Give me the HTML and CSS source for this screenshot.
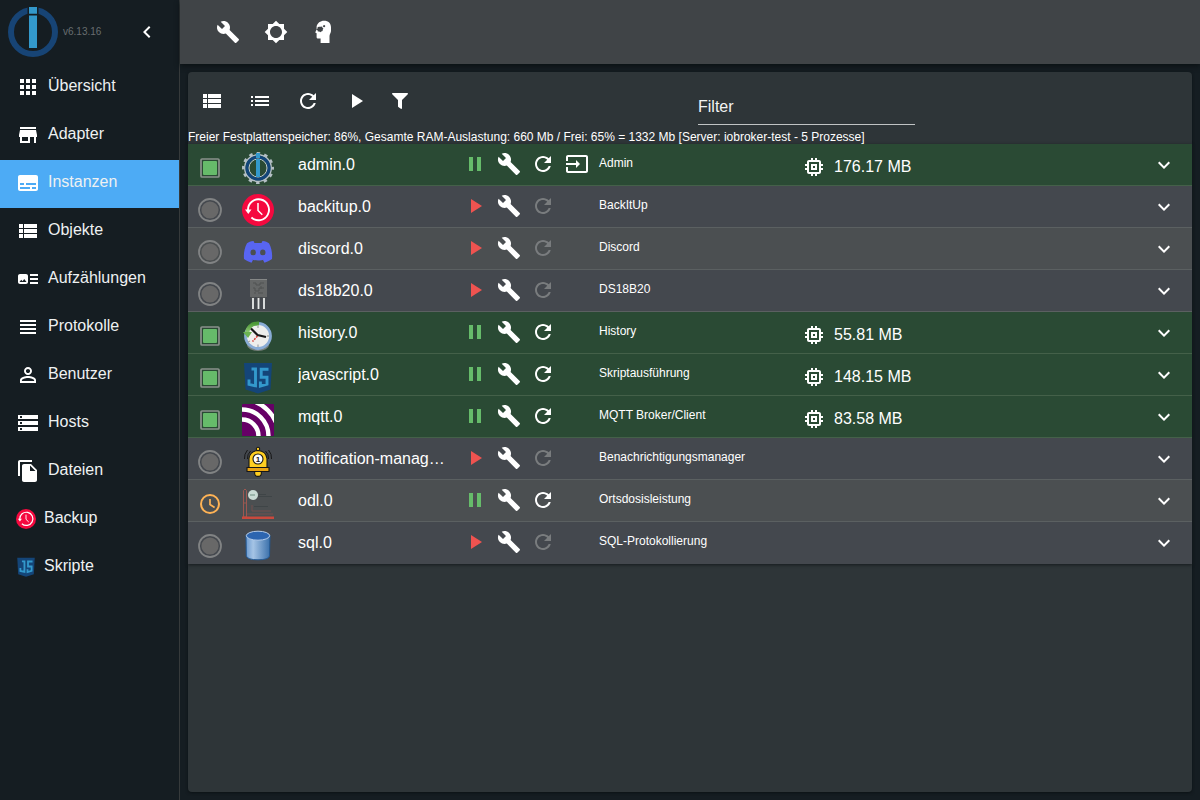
FILE: index.html
```html
<!DOCTYPE html>
<html lang="de">
<head>
<meta charset="utf-8">
<title>Instanzen</title>
<link rel="stylesheet" href="styles.css">
</head>
<body>
<svg class="sprite" aria-hidden="true">
  <defs>
    <linearGradient id="cylinder"><stop offset="0" stop-color="#6d9bd0"/><stop offset=".3" stop-color="#a5c4e5"/><stop offset="1" stop-color="#3a70ab"/></linearGradient>
    <linearGradient id="arrow" x2="0" y2="1"><stop offset="0" stop-color="#4d9a38"/><stop offset="1" stop-color="#9bd07d"/></linearGradient>
  </defs>
  <symbol id="build" viewBox="0 0 24 24"><path d="M22.7 19l-9.1-9.1c.9-2.3.4-5-1.5-6.9-2-2-5-2.4-7.4-1.3L9 6 6 9 1.6 4.7C.4 7.1.9 10.1 2.9 12.1c1.9 1.9 4.6 2.4 6.9 1.5l9.1 9.1c.4.4 1 .4 1.4 0l2.3-2.3c.5-.4.5-1.1.1-1.4z"/></symbol>
  <symbol id="brightness" viewBox="0 0 24 24"><path d="M20 15.31 23.31 12 20 8.69V4h-4.69L12 .69 8.69 4H4v4.69L.69 12 4 15.31V20h4.69L12 23.31 15.31 20H20v-4.69zM12 18c-3.31 0-6-2.69-6-6s2.69-6 6-6 6 2.69 6 6-2.69 6-6 6z"/></symbol>
  <symbol id="expert" viewBox="0 0 24 24"><path fill-rule="evenodd" d="M12 .8C16.500.8 19 3.400 19 7.500V11c0 2-1.500 3-1.500 5v7H8.600v-4.500H6.200c-1 0-1.600-.6-1.600-1.600v-3.700l-1.400-.7 1.400-2.900V6.600C5.200 3 8.400.8 12 .8zM7.400 6.700l-1.700.4-.2 1.500-1 .8 1 .9.400 1.200 1.400.1 1 .6 1-.8 1.300-.4.1-1.300.7-1.100-.9-.8-.4-1.200-1.400.1zM11.500 5.200l-.6.8.4 1 1 .3.8-.6.1-1-.8-.7z"/></symbol>
  <symbol id="apps" viewBox="0 0 24 24"><path d="M4 8h4V4H4v4zm6 12h4v-4h-4v4zm-6 0h4v-4H4v4zm0-6h4v-4H4v4zm6 0h4v-4h-4v4zm6-10v4h4V4h-4zm-6 4h4V4h-4v4zm6 6h4v-4h-4v4zm0 6h4v-4h-4v4z"/></symbol>
  <symbol id="store" viewBox="0 0 24 24"><path d="M20 4H4v2h16V4zm1 10v-2l-1-5H4l-1 5v2h1v6h10v-6h4v6h2v-6h1zm-9 4H6v-4h6v4z"/></symbol>
  <symbol id="subtitles" viewBox="0 0 24 24"><path d="M20 4H4c-1.100 0-2 .9-2 2v12c0 1.100.9 2 2 2h16c1.100 0 2-.9 2-2V6c0-1.100-.9-2-2-2zM4 12h4v2H4v-2zm10 6H4v-2h10v2zm6 0h-4v-2h4v2zm0-4H10v-2h10v2z"/></symbol>
  <symbol id="viewlist" viewBox="0 0 24 24"><path d="M3 14h4v-4H3v4zm0 5h4v-4H3v4zM3 9h4V5H3v4zm5 5h13v-4H8v4zm0 5h13v-4H8v4zM8 5v4h13V5H8z"/></symbol>
  <symbol id="arttrack" viewBox="0 0 24 24"><path d="M22 13h-8v-2h8v2zm0-6h-8v2h8V7zm-8 10h8v-2h-8v2zm-2-8v6c0 1.100-.9 2-2 2H4c-1.100 0-2-.9-2-2V9c0-1.100.9-2 2-2h6c1.100 0 2 .9 2 2zm-1.500 6-2.250-3-1.750 2.260-1.250-1.510L3.500 15h7z"/></symbol>
  <symbol id="headline" viewBox="0 0 24 24"><path d="M4 15h16v-2H4v2zm0 4h16v-2H4v2zm0-8h16V9H4v2zm0-6v2h16V5H4z"/></symbol>
  <symbol id="person" viewBox="0 0 24 24"><path d="M12 5.900c1.160 0 2.100.94 2.100 2.100s-.94 2.100-2.100 2.100S9.900 9.160 9.900 8s.94-2.100 2.100-2.100m0 9c2.970 0 6.100 1.460 6.100 2.100v1.100H5.900V17c0-.64 3.130-2.100 6.100-2.100M12 4C9.790 4 8 5.790 8 8s1.790 4 4 4 4-1.790 4-4-1.790-4-4-4zm0 9c-2.670 0-8 1.340-8 4v3h16v-3c0-2.660-5.330-4-8-4z"/></symbol>
  <symbol id="storage" viewBox="0 0 24 24"><path d="M2 20h20v-4H2v4zm2-3h2v2H4v-2zM2 4v4h20V4H2zm4 3H4V5h2v2zm-4 7h20v-4H2v4zm2-3h2v2H4v-2z"/></symbol>
  <symbol id="files" viewBox="0 0 24 24"><path d="M16 1H4c-1.100 0-2 .9-2 2v14h2V3h12V1zm-1 4 6 6v10c0 1.100-.9 2-2 2H7.990C6.890 23 6 22.100 6 21V7c0-1.100.89-2 1.990-2h7zm-1 7h5.500L14 6.500V12z"/></symbol>
  <symbol id="list" viewBox="0 0 24 24"><path d="M3 13h2v-2H3v2zm0 4h2v-2H3v2zm0-8h2V7H3v2zm4 4h14v-2H7v2zm0 4h14v-2H7v2zM7 7v2h14V7H7z"/></symbol>
  <symbol id="refresh" viewBox="0 0 24 24"><path d="M17.650 6.350C16.200 4.900 14.210 4 12 4c-4.420 0-7.990 3.580-7.990 8s3.570 8 7.990 8c3.730 0 6.840-2.550 7.730-6h-2.080c-.82 2.330-3.040 4-5.650 4-3.310 0-6-2.690-6-6s2.690-6 6-6c1.660 0 3.140.69 4.220 1.780L13 11h7V4l-2.350 2.350z"/></symbol>
  <symbol id="play" viewBox="0 0 24 24"><path d="M8 5v14l11-7z"/></symbol>
  <symbol id="pause" viewBox="0 0 24 24"><path d="M6 19h4V5H6v14zm8-14v14h4V5h-4z"/></symbol>
  <symbol id="filter" viewBox="0 0 512 512"><path d="M487.976 0H24.028C2.710 0-8.047 25.866 7.058 40.971L192 225.941V432c0 7.831 3.821 15.170 10.237 19.662l80 55.980C298.020 518.690 320 507.493 320 487.980V225.941l184.947-184.970C520.021 25.896 509.338 0 487.976 0z"/></symbol>
  <symbol id="input" viewBox="0 0 24 24"><path d="M21 3.010H3c-1.100 0-2 .9-2 2V9h2V4.990h18v14.030H3V15H1v4.010c0 1.100.9 1.980 2 1.980h18c1.100 0 2-.88 2-1.980v-14c0-1.110-.9-2-2-2zM11 16l4-4-4-4v3H1v2h10v3z"/></symbol>
  <symbol id="memory" viewBox="0 0 24 24"><path d="M15 9H9v6h6V9zm-2 4h-2v-2h2v2zm8-2V9h-2V7c0-1.100-.9-2-2-2h-2V3h-2v2h-2V3H9v2H7c-1.100 0-2 .9-2 2v2H3v2h2v2H3v2h2v2c0 1.100.9 2 2 2h2v2h2v-2h2v2h2v-2h2c1.100 0 2-.9 2-2v-2h2v-2h-2v-2h2zm-4 6H7V7h10v10z"/></symbol>
  <symbol id="more" viewBox="0 0 24 24"><path d="M16.590 8.590 12 13.170 7.410 8.590 6 10l6 6 6-6z"/></symbol>
  <symbol id="left" viewBox="0 0 24 24"><path d="M15.410 7.410 14 6l-6 6 6 6 1.410-1.410L10.830 12z"/></symbol>
  <symbol id="logo" viewBox="0 0 50 50"><circle cx="25" cy="25" r="22" fill="none" stroke="#174475" stroke-width="6"/><path fill="#151d22" d="M19.500 0h11v10h-11z"/><path fill="#3399cc" d="M21 0h8v6.800h-8zM21 8.500h8v32.500h-8z"/></symbol>
  <symbol id="backup" viewBox="0 0 32 32"><circle cx="16" cy="16" r="16" fill="#f5093f"/><g fill="none" stroke="#fff" stroke-width="1.900"><path d="M6 16.200A10.500 10.500 0 1 1 9.400 23.500"/><path stroke-width="1.500" d="M16 9v7.500l4.300 4.200"/></g><path fill="#fff" d="M3 15.500h6.500L6.300 20z"/></symbol>
  <symbol id="js" viewBox="0 0 32 32"><path fill="#144578" d="M2 1h28l-1.500 26.500L16 31.500 3.500 27.500z"/><path fill="none" stroke="#3399cc" stroke-width="2.900" d="M13.500 5.500v18.300l-6.500-1.400v-4.800M26.500 7.200h-7.300v8h5.800v7L18.400 24v-4.500M9.500 7h4"/></symbol>
  <symbol id="circle" viewBox="0 0 24 24"><circle cx="12" cy="12" r="11" fill="none" stroke="#818384" stroke-width="1.800"/><circle cx="12" cy="12" r="8.600" fill="#686868"/></symbol>
  <symbol id="square" viewBox="0 0 24 24"><rect x="3" y="3" width="18" height="18" rx="1" fill="none" stroke="#8b918c" stroke-width="1.700"/><rect x="5" y="5" width="14" height="14" rx="1" fill="#66bb6a"/></symbol>
  <symbol id="clock" viewBox="0 0 24 24"><g fill="none" stroke="#ffb355"><circle cx="12" cy="12" r="9" stroke-width="2"/><path stroke-width="1.700" d="M12 7v5.600l4.600 2.800"/></g></symbol>
  <symbol id="admin" viewBox="0 0 32 32"><circle cx="16" cy="16" r="13.200" fill="none" stroke="#b4bfc4" stroke-width="1.600"/><circle cx="16" cy="16" r="14.700" fill="none" stroke="#b4bfc4" stroke-width="2.600" stroke-dasharray="3.500 4.197" stroke-dashoffset="1.750"/><circle cx="16" cy="16" r="11" fill="none" stroke="#124579" stroke-width="3.200"/><circle cx="16" cy="16" r="9" fill="none" stroke="#c0cbce" stroke-width="1"/><path fill="#3399cc" d="M14 1h4v5h-4zM14 7h4v18h-4z"/></symbol>
  <symbol id="discord" viewBox="0 0 32 32"><path fill="#5865f2" fill-rule="evenodd" d="M11.500 5C8.500 5.400 6.700 6.200 5 7.200 2.400 12 1.500 17.200 2 23c2.700 2 5.100 3 7.500 3.700l1.500-2.700-2.300-1c4.600 2 10.100 2 14.600 0L21 24l1.500 2.700c2.400-.7 4.800-1.700 7.500-3.700.5-5.800-.4-11-3-15.800-1.700-1-3.500-1.800-6.500-2.200l-1 2h-7zM11.200 13.500a2.700 2.900 0 1 1 0 5.800 2.700 2.900 0 0 1 0-5.800zm9.600 0a2.700 2.900 0 1 1 0 5.800 2.700 2.900 0 0 1 0-5.800z"/></symbol>
  <symbol id="sensor" viewBox="0 0 32 32"><path fill="#656767" d="M8 1h17v18H8z"/><path fill="#858787" d="M8 1h17v1H8z"/><path stroke="#505253" stroke-width="1" fill="none" d="M11 5h3v2h4V5h4M11 10h2v3h4v-3h5M12 15h2m2 0h5M19 8v3"/><path stroke="#505252" stroke-width="3" d="M11 19v3m5.500-3v3m5.500-3v3"/><path stroke="#e8eaea" stroke-width="1.800" d="M11 20v11m5.500-11v11m5.500-11v11"/></symbol>
  <symbol id="history" viewBox="0 0 32 32"><ellipse cx="16" cy="25" rx="11" ry="6" fill="#78807b"/><circle cx="16" cy="16" r="12.500" fill="#eeeeec" stroke="#89acd6" stroke-width="2.800"/><path fill="none" stroke="url(#arrow)" stroke-width="4" d="M17 3.500C9 3 5 8 5 14"/><path fill="#6bb251" d="M1 12h9l-4 6z"/><path stroke="#a8aaa8" stroke-width="1.300" d="M16 5.500V8m0 16.500V27m9-11h2M8 21l-2 1"/><path fill="none" stroke="#171717" stroke-width="2.200" d="m9 8.500 6.500 6.500 8.500 2"/><path stroke="#d53b34" stroke-width="1.500" stroke-dasharray="2 1" d="m15.500 16-5 5.500"/></symbol>
  <symbol id="mqtt" viewBox="0 0 32 32"><rect width="32" height="32" rx="1" fill="#660066"/><clipPath id="mqttbox"><rect width="32" height="32" rx="1"/></clipPath><g clip-path="url(#mqttbox)" fill="none" stroke="#fff" stroke-width="4.400"><circle cx="0" cy="32" r="16.500"/><circle cx="0" cy="32" r="26.500"/><circle cx="0" cy="32" r="36.500"/></g></symbol>
  <symbol id="bell" viewBox="0 0 32 32"><g fill="none" stroke="#171717" stroke-width="1"><path d="M5.500 4Q2 8 2.500 13M8.500 5Q5 8.500 5.500 13M26.500 4Q30 8 29.500 13M23.500 5Q27 8.500 26.500 13"/></g><g fill="#ffcf22" stroke="#171717" stroke-width="1.100"><circle cx="16" cy="27" r="3.400"/><circle cx="16" cy="3" r="1.700"/><path d="M7 22V12.500Q8 5 16 4.500 24 5 25 12.500V22z"/><path fill="#e9a413" d="M5 21.500h22v4H5z"/><circle cx="16" cy="13" r="5" fill="#fff"/></g><text class="bell-digit" x="16" y="16" text-anchor="middle">1</text></symbol>
  <symbol id="odl" viewBox="0 0 32 32"><path fill="none" stroke="#9c5851" d="M1.500 2.500 3 1l1.500 1.500V29h-3zM1 15h4"/><path fill="none" stroke="#74504e" d="M10 17v6h19M5 26h26"/><path fill="#c9493d" d="M0 28.500h32V31H0z"/><circle cx="11" cy="7" r="5" fill="#c9dbd4"/><path stroke="#9bb5aa" stroke-width="2" d="M8 7h5"/><path stroke="#3f4547" d="M17 6.500h7m-8 2h14M12 18.500h14"/></symbol>
  <symbol id="sql" viewBox="0 0 32 32"><path fill="url(#cylinder)" stroke="#235a96" d="M4 5.500 4.300 26Q5.500 29.800 16 29.800T27.500 26L28 5.500z"/><ellipse cx="16" cy="5.700" rx="11.700" ry="4.500" fill="#2c65b0" stroke="#b5cdea" stroke-width="1"/></symbol>
</svg>
<div class="app">
  <aside class="sidebar">
    <header class="brand">
      <svg class="brand-logo"><use href="#logo"/></svg>
      <span class="version">v6.13.16</span>
      <button class="icon-button collapse" aria-label="Menü einklappen"><svg class="icon"><use href="#left"/></svg></button>
    </header>
    <nav class="menu">
      <a href="#overview" class="menu-item"><svg class="icon"><use href="#apps"/></svg>Übersicht</a>
      <a href="#adapters" class="menu-item"><svg class="icon"><use href="#store"/></svg>Adapter</a>
      <a href="#instances" class="menu-item active" aria-current="page"><svg class="icon"><use href="#subtitles"/></svg>Instanzen</a>
      <a href="#objects" class="menu-item"><svg class="icon"><use href="#viewlist"/></svg>Objekte</a>
      <a href="#enums" class="menu-item"><svg class="icon"><use href="#arttrack"/></svg>Aufzählungen</a>
      <a href="#logs" class="menu-item"><svg class="icon"><use href="#headline"/></svg>Protokolle</a>
      <a href="#users" class="menu-item"><svg class="icon"><use href="#person"/></svg>Benutzer</a>
      <a href="#hosts" class="menu-item"><svg class="icon"><use href="#storage"/></svg>Hosts</a>
      <a href="#files-tab" class="menu-item"><svg class="icon"><use href="#files"/></svg>Dateien</a>
      <a href="#backup-tab" class="menu-item"><svg class="icon tab-icon"><use href="#backup"/></svg>Backup</a>
      <a href="#scripts" class="menu-item"><svg class="icon tab-icon"><use href="#js"/></svg>Skripte</a>
    </nav>
  </aside>
  <div class="content">
    <header class="appbar">
      <button class="icon-button" aria-label="Systemeinstellungen"><svg class="icon"><use href="#build"/></svg></button>
      <button class="icon-button" aria-label="Farbschema"><svg class="icon"><use href="#brightness"/></svg></button>
      <button class="icon-button" aria-label="Expertenmodus"><svg class="icon"><use href="#expert"/></svg></button>
    </header>
    <main class="panel">
      <div class="toolbar">
        <button class="icon-button" aria-label="Kategorien"><svg class="icon"><use href="#viewlist"/></svg></button>
        <button class="icon-button" aria-label="Liste"><svg class="icon"><use href="#list"/></svg></button>
        <button class="icon-button" aria-label="Aktualisieren"><svg class="icon"><use href="#refresh"/></svg></button>
        <button class="icon-button" aria-label="Nur laufende"><svg class="icon"><use href="#play"/></svg></button>
        <button class="icon-button compact" aria-label="Statusfilter"><svg class="icon small"><use href="#filter"/></svg></button>
        <input class="filter" type="text" placeholder="Filter" aria-label="Filter">
      </div>
      <p class="summary">Freier Festplattenspeicher: 86%, Gesamte RAM-Auslastung: 660 Mb / Frei: 65% = 1332 Mb [Server: iobroker-test - 5 Prozesse]</p>
      <ul class="instances" id="instances"></ul>
    </main>
  </div>
</div>
<script src="app.js"></script>
</body>
</html>
```
FILE: app.js
```js
const instances = [
  { name: 'admin.0', icon: 'admin', title: 'Admin', status: 'square', memory: '176.17 MB', link: true },
  { name: 'backitup.0', icon: 'backup', title: 'BackItUp', status: 'circle' },
  { name: 'discord.0', icon: 'discord', title: 'Discord', status: 'circle' },
  { name: 'ds18b20.0', icon: 'sensor', title: 'DS18B20', status: 'circle' },
  { name: 'history.0', icon: 'history', title: 'History', status: 'square', memory: '55.81 MB' },
  { name: 'javascript.0', icon: 'js', title: 'Skriptausführung', status: 'square', memory: '148.15 MB' },
  { name: 'mqtt.0', icon: 'mqtt', title: 'MQTT Broker/Client', status: 'square', memory: '83.58 MB' },
  { name: 'notification-manager.0', icon: 'bell', title: 'Benachrichtigungsmanager', status: 'circle' },
  { name: 'odl.0', icon: 'odl', title: 'Ortsdosisleistung', status: 'clock' },
  { name: 'sql.0', icon: 'sql', title: 'SQL-Protokollierung', status: 'circle' },
];

const svg = (id, cls = 'icon') => `<svg class="${cls}"><use href="#${id}"/></svg>`;
const button = (id, label, cls = '', attrs = '') =>
  `<button class="action ${cls}" aria-label="${label}" ${attrs}>${svg(id)}</button>`;

document.getElementById('instances').innerHTML = instances.map((item) => {
  const enabled = item.status !== 'circle';
  return `<li class="row ${item.status === 'square' ? 'running' : ''}">
    <span class="status">${svg(item.status)}</span>
    ${svg(item.icon, 'avatar')}
    <span class="name">${item.name}</span>
    <span class="actions">
      ${enabled ? button('pause', 'Anhalten', 'stop') : button('play', 'Starten', 'start')}
      ${button('build', 'Einstellungen')}
      ${button('refresh', 'Neu starten', '', enabled ? '' : 'disabled')}
      ${item.link ? button('input', 'Öffnen') : ''}
    </span>
    <span class="title">${item.title}</span>
    <span class="memory">${item.memory ? svg('memory') + item.memory : ''}</span>
    ${button('more', 'Aufklappen', 'expand')}
  </li>`;
}).join('');
```
FILE: styles.css
```css
* { box-sizing: border-box; }
body {
  margin: 0;
  background: #151d22;
  color: #fff;
  font: 16px/24px "Liberation Sans", Arial, sans-serif;
}
button { padding: 0; border: 0; background: none; color: inherit; font: inherit; }
.sprite { position: absolute; width: 0; height: 0; }
.icon { display: block; flex: none; width: 24px; height: 24px; fill: currentColor; }
.icon.small { width: 16px; height: 16px; }
.icon-button { display: grid; place-items: center; flex: none; width: 48px; height: 48px; }
.icon-button.compact { width: 40px; }
.app { display: flex; min-height: 100vh; }

.sidebar { flex: none; width: 180px; border-right: 1px solid #363a3b; }
.brand { display: flex; align-items: center; height: 64px; padding-left: 8px; }
.brand-logo { flex: none; width: 50px; height: 50px; }
.version { margin-left: 5px; color: #686d70; font-size: 10px; }
.collapse { margin-left: auto; margin-right: 8px; }
.menu-item {
  display: flex;
  gap: 8px;
  height: 48px;
  padding: 11px 16px;
  color: #eef1f2;
  line-height: 22px;
  text-decoration: none;
}
.menu-item.active { background: #4dabf5; }
.menu-item .icon { color: #fff; }
.menu-item .tab-icon { width: 20px; height: 20px; margin-top: 2px; }

.content { display: flex; flex: 1; flex-direction: column; min-width: 0; }
.appbar {
  display: flex;
  align-items: center;
  height: 64px;
  padding-left: 24px;
  background: #404447;
  box-shadow: 0 2px 5px #0b1114;
}
.panel {
  flex: 1;
  margin: 8px;
  border-radius: 4px;
  background: #2e3538;
  box-shadow: 0 1px 3px #0b1114;
}
.toolbar { display: flex; align-items: center; height: 58px; }
.filter {
  width: 217px;
  height: 36px;
  margin: 12px 277px 0 auto;
  padding: 0;
  border: 0;
  border-bottom: 1px solid #c0c3c4;
  outline: 0;
  background: none;
  color: #fff;
  font: inherit;
}
.filter::placeholder { color: #f2f3f3; opacity: 1; }
.summary { margin: 0; font-size: 12px; line-height: 14px; white-space: nowrap; }

.instances { margin: 0; padding: 0; list-style: none; box-shadow: 0 1px 3px #151b1d; }
.row {
  display: grid;
  grid-template-columns: 54px 56px 160px 141px 203px 1fr 24px;
  align-items: start;
  height: 42px;
  padding-right: 16px;
  border-bottom: 1px solid #5b6061;
  background: #44484e;
}
.row:nth-child(odd) { background: #4b4f51; }
.row:last-child { border-bottom: 0; }
.row.running { border-color: #446049; background: #2a4a34; }
.status { display: grid; justify-items: center; width: 44px; padding-top: 12px; }
.avatar { width: 32px; height: 32px; margin-top: 8px; }
.name { overflow: hidden; margin-right: 11px; padding-top: 9px; text-overflow: ellipsis; white-space: nowrap; }
.actions { display: flex; padding-top: 8px; }
.action { display: grid; justify-items: center; width: 34px; }
.action:disabled { color: #797c7e; }
.start { color: #ef5350; }
.stop { color: #66bb6a; }
.expand { width: 24px; padding-top: 9px; }
.title { padding-top: 11px; font-size: 12px; line-height: 16px; white-space: nowrap; }
.memory { display: flex; gap: 8px; padding-top: 11px; }
.bell-digit { font: bold 8px "Liberation Sans", Arial, sans-serif; fill: #171717; }
```
